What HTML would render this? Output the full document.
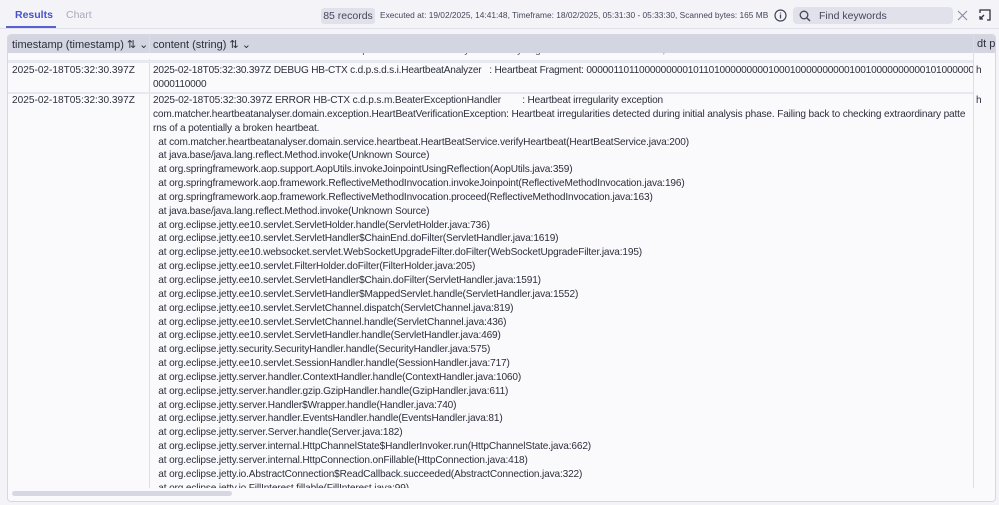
<!DOCTYPE html>
<html><head><style>
*{margin:0;padding:0;box-sizing:border-box}
body{width:999px;height:505px;overflow:hidden;background:#f4f4f8;font-family:"Liberation Sans",sans-serif;color:#2c2e3c;position:relative}
.abs{position:absolute;white-space:pre}
.tab{font-size:11px}
.t{font-size:10.1px;line-height:13.85px}
</style></head><body>
<div class="abs" style="left:15px;top:9px;font-size:10.5px;color:#4a50c8;font-weight:bold">Results</div>
<div class="abs" style="left:66px;top:9px;font-size:10.5px;color:#a8aabb">Chart</div>
<div class="abs" style="left:6px;top:26px;width:50px;height:2px;background:#5a60d0"></div>
<div class="abs" style="left:0;top:28px;width:999px;height:1px;background:#e0e1ea"></div>
<div class="abs" style="left:321px;top:8px;width:54px;height:16px;background:#e0e1ea;border-radius:3px;font-size:10.5px;line-height:16px;text-align:center;color:#44465a">85 records</div>
<div class="abs" style="left:380px;top:10px;font-size:8.35px;color:#44465a">Executed at: 19/02/2025, 14:41:48, Timeframe: 18/02/2025, 05:31:30 - 05:33:30, Scanned bytes: 165 MB</div>
<svg class="abs" style="left:774px;top:9px" width="13" height="13" viewBox="0 0 13 13"><circle cx="6.5" cy="6.5" r="5.5" fill="none" stroke="#44465a" stroke-width="1.2"/><path d="M6.5 5.5v4M6.5 3.5v1" stroke="#44465a" stroke-width="1.3"/></svg>
<div class="abs" style="left:793px;top:7px;width:160px;height:17px;background:#e0e1ea;border-radius:4px"></div>
<svg class="abs" style="left:799px;top:10px" width="12" height="12" viewBox="0 0 12 12"><circle cx="5" cy="5" r="3.8" fill="none" stroke="#44465a" stroke-width="1.3"/><path d="M8 8l3 3" stroke="#44465a" stroke-width="1.4"/></svg>
<div class="abs" style="left:819px;top:10px;font-size:10.5px;color:#44465a">Find keywords</div>
<svg class="abs" style="left:957px;top:10px" width="11" height="11"><path d="M1 1l9 9M10 1l-9 9" stroke="#8a8ca0" stroke-width="1.2"/></svg>
<svg class="abs" style="left:979px;top:9px" width="12" height="12" viewBox="0 0 12 12"><path d="M1 4V1h10v10H8M5 6l-4 4M1 7v3h3" fill="none" stroke="#2c2e3c" stroke-width="1.3"/></svg>

<div class="abs" style="left:7px;top:34px;width:989px;height:468px;border:1px solid #d6d7e2;border-radius:4px;background:#fafafc;overflow:hidden">
<div class="abs" style="left:0;top:0;width:989px;height:18px;background:#d3d5e1"></div>
<div class="abs tab" style="left:4px;top:3px">timestamp (timestamp) ⇅ ⌄</div>
<div class="abs" style="left:141px;top:0;width:1px;height:470px;background:#dcdde6"></div>
<div class="abs tab" style="left:145px;top:3px">content (string) ⇅ ⌄</div>
<div class="abs" style="left:0;top:25px;width:989px;height:3px;background:#e8e9f0"></div>
<div class="abs" style="left:0;top:57px;width:989px;height:2px;background:#e8e9f0"></div>
<div class="abs t" style="left:4px;top:29px">2025-02-18T05:32:30.397Z</div>
<div class="abs" style="left:145px;top:29px;width:820px;height:430px;overflow:hidden">
<div class="abs t" style="left:0;top:0;letter-spacing:-0.2px">2025-02-18T05:32:30.397Z DEBUG HB-CTX c.d.p.s.d.s.i.HeartbeatAnalyzer   : Heartbeat Fragment: 000001101100000000010110100000000010001000000000010010000000000101000000
0000110000</div>
<div class="abs t" style="left:0;top:30px;letter-spacing:-0.15px">2025-02-18T05:32:30.397Z ERROR HB-CTX c.d.p.s.m.BeaterExceptionHandler        : Heartbeat irregularity exception
com.matcher.heartbeatanalyser.domain.exception.HeartBeatVerificationException: Heartbeat irregularities detected during initial analysis phase. Failing back to checking extraordinary patte
rns of a potentially a broken heartbeat.
  at com.matcher.heartbeatanalyser.domain.service.heartbeat.HeartBeatService.verifyHeartbeat(HeartBeatService.java:200)
  at java.base/java.lang.reflect.Method.invoke(Unknown Source)
  at org.springframework.aop.support.AopUtils.invokeJoinpointUsingReflection(AopUtils.java:359)
  at org.springframework.aop.framework.ReflectiveMethodInvocation.invokeJoinpoint(ReflectiveMethodInvocation.java:196)
  at org.springframework.aop.framework.ReflectiveMethodInvocation.proceed(ReflectiveMethodInvocation.java:163)
  at java.base/java.lang.reflect.Method.invoke(Unknown Source)
  at org.eclipse.jetty.ee10.servlet.ServletHolder.handle(ServletHolder.java:736)
  at org.eclipse.jetty.ee10.servlet.ServletHandler$ChainEnd.doFilter(ServletHandler.java:1619)
  at org.eclipse.jetty.ee10.websocket.servlet.WebSocketUpgradeFilter.doFilter(WebSocketUpgradeFilter.java:195)
  at org.eclipse.jetty.ee10.servlet.FilterHolder.doFilter(FilterHolder.java:205)
  at org.eclipse.jetty.ee10.servlet.ServletHandler$Chain.doFilter(ServletHandler.java:1591)
  at org.eclipse.jetty.ee10.servlet.ServletHandler$MappedServlet.handle(ServletHandler.java:1552)
  at org.eclipse.jetty.ee10.servlet.ServletChannel.dispatch(ServletChannel.java:819)
  at org.eclipse.jetty.ee10.servlet.ServletChannel.handle(ServletChannel.java:436)
  at org.eclipse.jetty.ee10.servlet.ServletHandler.handle(ServletHandler.java:469)
  at org.eclipse.jetty.security.SecurityHandler.handle(SecurityHandler.java:575)
  at org.eclipse.jetty.ee10.servlet.SessionHandler.handle(SessionHandler.java:717)
  at org.eclipse.jetty.server.handler.ContextHandler.handle(ContextHandler.java:1060)
  at org.eclipse.jetty.server.handler.gzip.GzipHandler.handle(GzipHandler.java:611)
  at org.eclipse.jetty.server.Handler$Wrapper.handle(Handler.java:740)
  at org.eclipse.jetty.server.handler.EventsHandler.handle(EventsHandler.java:81)
  at org.eclipse.jetty.server.Server.handle(Server.java:182)
  at org.eclipse.jetty.server.internal.HttpChannelState$HandlerInvoker.run(HttpChannelState.java:662)
  at org.eclipse.jetty.server.internal.HttpConnection.onFillable(HttpConnection.java:418)
  at org.eclipse.jetty.io.AbstractConnection$ReadCallback.succeeded(AbstractConnection.java:322)
  at org.eclipse.jetty.io.FillInterest.fillable(FillInterest.java:99)</div>
</div>
<div class="abs t" style="left:4px;top:59px">2025-02-18T05:32:30.397Z</div>
<div class="abs" style="left:965px;top:0;width:24px;height:470px;background:#fafafc;border-left:1px solid #dcdde6"></div>
<div class="abs" style="left:966px;top:0;width:23px;height:18px;background:#d3d5e1"></div>
<div class="abs tab" style="left:969px;top:3px">dt p</div>
<div class="abs t" style="left:968px;top:29px">h</div>
<div class="abs t" style="left:968px;top:59px">h</div>
<div class="abs" style="left:0;top:453px;width:989px;height:15px;background:#fafafc"></div>
<div class="abs" style="left:4px;top:456px;width:220px;height:5px;background:#d6d7e2;border-radius:3px"></div>
<div class="abs" style="left:0;top:18px;width:965px;height:6px;background:#fafafc;overflow:hidden"><div class="abs t" style="left:145px;top:-9px;color:#555">2025-02-18T05:32:30.397Z INFO HB-CTX c.d.p.s.d.s.i.HeartbeatAnalyzer   : Analysing heartrate batch. Frames: 1, beats: 10</div><div class="abs t" style="left:4px;top:-9px;color:#555">2025-02-18T05:32:30.397Z</div></div>
</div>
</body></html>
